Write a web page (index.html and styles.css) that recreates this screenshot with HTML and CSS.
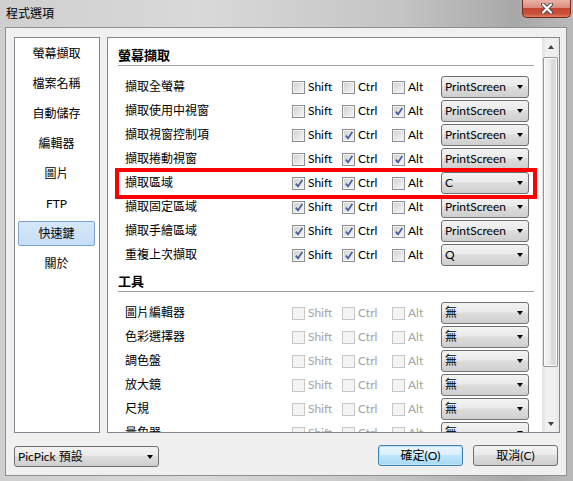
FILE: index.html
```html
<!DOCTYPE html>
<html>
<head>
<meta charset="utf-8">
<link rel="stylesheet" href="styles.css">
</head>
<body>
<div class="window">
  <div class="titlebar">
    <span class="title">程式選項</span>
    <div class="close">
      <svg width="12" height="11" viewBox="0 0 12 11"><path d="M2 1.5 L10 9.5 M10 1.5 L2 9.5" stroke="#4a4a4a" stroke-width="4" stroke-linecap="round"/><path d="M2 1.5 L10 9.5 M10 1.5 L2 9.5" stroke="#fff" stroke-width="2.2" stroke-linecap="round"/></svg>
    </div>
  </div>
  <div class="client">
    <div class="panes">
      <ul class="nav">
        <li>螢幕擷取</li>
        <li>檔案名稱</li>
        <li>自動儲存</li>
        <li>編輯器</li>
        <li>圖片</li>
        <li>FTP</li>
        <li class="sel">快速鍵</li>
        <li>關於</li>
      </ul>
      <div class="main">
        <div class="scroll">
          <div class="sec">螢幕擷取</div>
          <div class="rows">
            <div class="row"><span class="lbl">擷取全螢幕</span>
              <span class="cb"><i class="box"></i>Shift</span><span class="cb"><i class="box"></i>Ctrl</span><span class="cb"><i class="box"></i>Alt</span>
              <div class="combo"><span>PrintScreen</span><i class="arr"></i></div></div>
            <div class="row"><span class="lbl">擷取使用中視窗</span>
              <span class="cb"><i class="box"></i>Shift</span><span class="cb"><i class="box"></i>Ctrl</span><span class="cb"><i class="box on"></i>Alt</span>
              <div class="combo"><span>PrintScreen</span><i class="arr"></i></div></div>
            <div class="row"><span class="lbl">擷取視窗控制項</span>
              <span class="cb"><i class="box"></i>Shift</span><span class="cb"><i class="box on"></i>Ctrl</span><span class="cb"><i class="box"></i>Alt</span>
              <div class="combo"><span>PrintScreen</span><i class="arr"></i></div></div>
            <div class="row"><span class="lbl">擷取捲動視窗</span>
              <span class="cb"><i class="box"></i>Shift</span><span class="cb"><i class="box on"></i>Ctrl</span><span class="cb"><i class="box on"></i>Alt</span>
              <div class="combo"><span>PrintScreen</span><i class="arr"></i></div></div>
            <div class="row"><span class="lbl">擷取區域</span>
              <span class="cb"><i class="box on"></i>Shift</span><span class="cb"><i class="box on"></i>Ctrl</span><span class="cb"><i class="box"></i>Alt</span>
              <div class="combo"><span>C</span><i class="arr"></i></div></div>
            <div class="row"><span class="lbl">擷取固定區域</span>
              <span class="cb"><i class="box on"></i>Shift</span><span class="cb"><i class="box on"></i>Ctrl</span><span class="cb"><i class="box"></i>Alt</span>
              <div class="combo"><span>PrintScreen</span><i class="arr"></i></div></div>
            <div class="row"><span class="lbl">擷取手繪區域</span>
              <span class="cb"><i class="box on"></i>Shift</span><span class="cb"><i class="box on"></i>Ctrl</span><span class="cb"><i class="box on"></i>Alt</span>
              <div class="combo"><span>PrintScreen</span><i class="arr"></i></div></div>
            <div class="row"><span class="lbl">重複上次擷取</span>
              <span class="cb"><i class="box on"></i>Shift</span><span class="cb"><i class="box on"></i>Ctrl</span><span class="cb"><i class="box"></i>Alt</span>
              <div class="combo"><span>Q</span><i class="arr"></i></div></div>
          </div>
          <div class="sec sec2">工具</div>
          <div class="rows dis">
            <div class="row"><span class="lbl">圖片編輯器</span>
              <span class="cb"><i class="box"></i>Shift</span><span class="cb"><i class="box"></i>Ctrl</span><span class="cb"><i class="box"></i>Alt</span>
              <div class="combo"><span>無</span><i class="arr"></i></div></div>
            <div class="row"><span class="lbl">色彩選擇器</span>
              <span class="cb"><i class="box"></i>Shift</span><span class="cb"><i class="box"></i>Ctrl</span><span class="cb"><i class="box"></i>Alt</span>
              <div class="combo"><span>無</span><i class="arr"></i></div></div>
            <div class="row"><span class="lbl">調色盤</span>
              <span class="cb"><i class="box"></i>Shift</span><span class="cb"><i class="box"></i>Ctrl</span><span class="cb"><i class="box"></i>Alt</span>
              <div class="combo"><span>無</span><i class="arr"></i></div></div>
            <div class="row"><span class="lbl">放大鏡</span>
              <span class="cb"><i class="box"></i>Shift</span><span class="cb"><i class="box"></i>Ctrl</span><span class="cb"><i class="box"></i>Alt</span>
              <div class="combo"><span>無</span><i class="arr"></i></div></div>
            <div class="row"><span class="lbl">尺規</span>
              <span class="cb"><i class="box"></i>Shift</span><span class="cb"><i class="box"></i>Ctrl</span><span class="cb"><i class="box"></i>Alt</span>
              <div class="combo"><span>無</span><i class="arr"></i></div></div>
            <div class="row"><span class="lbl">量角器</span>
              <span class="cb"><i class="box"></i>Shift</span><span class="cb"><i class="box"></i>Ctrl</span><span class="cb"><i class="box"></i>Alt</span>
              <div class="combo"><span>無</span><i class="arr"></i></div></div>
          </div>
        </div>
        <div class="vscroll">
          <div class="sb-btn"><i class="up"></i></div>
          <div class="sb-track"><div class="thumb"></div></div>
          <div class="sb-btn"><i class="down"></i></div>
        </div>
      </div>
    </div>
    <div class="footer">
      <div class="combo preset"><span>PicPick 預設</span><i class="arr"></i></div>
      <div class="btns">
        <div class="btn default">確定(O)</div>
        <div class="btn">取消(C)</div>
      </div>
    </div>
  </div>
  <div class="mark"></div>
</div>
</body>
</html>
```
FILE: styles.css
```css
* { box-sizing: border-box; margin: 0; padding: 0; }
html, body { width: 573px; height: 481px; overflow: hidden; }
body {
  font-family: Lato, "Noto Sans CJK TC", sans-serif;
  font-size: 12px;
  color: #000;
  background: #c8c8c8;
}
.window {
  position: relative;
  width: 573px;
  height: 481px;
  display: flex;
  flex-direction: column;
  background: linear-gradient(to right, #cfcfcf 0%, #d9d9d9 35%, #c4c4c4 70%, #a8a8a8 90%, #b9b9b9 100%);
}
.titlebar {
  height: 27px;
  display: flex;
  align-items: flex-start;
  padding-left: 6px;
}
.title {
  font-family: "Noto Sans CJK TC", sans-serif;
  font-size: 12px;
  line-height: 16px;
  margin-top: 5px;
}
.close {
  margin-left: auto;
  margin-right: 2px;
  width: 49px;
  height: 18px;
  border: 1px solid #6e2a1f;
  border-top: 0;
  border-radius: 0 0 5px 5px;
  background: linear-gradient(#e9b1a6 0%, #dd8c7d 45%, #c5452f 50%, #c94f38 80%, #e27c62 100%);
  display: flex;
  align-items: center;
  justify-content: center;
}
.client {
  flex: 1;
  margin: 0 6px 5px 5px;
  border: 1px solid #8f8f8f;
  background: #f0f0f0;
  display: flex;
  flex-direction: column;
}
.panes {
  display: flex;
  gap: 7px;
  padding: 9px 6px 0 8px;
  height: 405px;
}
.nav {
  width: 86px;
  flex: none;
  border: 1px solid #828790;
  background: #fff;
  list-style: none;
  padding: 3px 4px 0 3px;
  font-family: Lato, "Noto Sans CJK TC", sans-serif;
}
.nav li {
  height: 25px;
  line-height: 23px;
  margin-bottom: 5px;
  border: 1px solid transparent;
  border-radius: 2px;
  text-align: center;
}
.nav li.sel {
  background: linear-gradient(#d6e8fa, #c6ddf6);
  border-color: #7da2ce;
}
.main {
  flex: 1;
  display: flex;
  border: 1px solid #828790;
  background: #fff;
  overflow: hidden;
}
.scroll {
  flex: 1;
  overflow: hidden;
}
.sec {
  margin: 9px 8px 0 10px;
  font-size: 13px;
  font-weight: bold;
  line-height: 16px;
  padding-bottom: 2px;
  border-bottom: 1px solid #a0a0a0;
}
.sec2 { margin-top: 6px; }
.rows {
  margin-top: 9px;
  padding-left: 17px;
}
.row {
  display: grid;
  grid-template-columns: 167px 50px 50px 49px 88px;
  height: 24px;
  align-items: center;
}
.lbl { line-height: 16px; }
.cb {
  display: flex;
  align-items: center;
  gap: 3px;
  line-height: 16px;
}
.box {
  width: 13px;
  height: 13px;
  border: 1px solid #8e8f8f;
  background: linear-gradient(135deg, #cfcfcf, #f8f8f8);
  box-shadow: inset 0 0 0 1px #f2f2f2;
  position: relative;
}
.box.on::after {
  content: "";
  position: absolute;
  left: 2px;
  top: 1px;
  width: 8px;
  height: 9px;
  background: no-repeat center / 8px 9px url("data:image/svg+xml;utf8,<svg xmlns='http://www.w3.org/2000/svg' viewBox='0 0 8 9'><path d='M0.8 4.6 L3 7.4 L7.3 0.9' fill='none' stroke='%23425d9c' stroke-width='1.7'/></svg>");
}
.dis .cb { color: #a3a3a3; }
.dis .box {
  border-color: #c6c6c6;
  background: #f4f4f4;
  box-shadow: none;
}
.combo {
  height: 22px;
  border: 1px solid #707070;
  border-radius: 3px;
  background: linear-gradient(#f2f2f2 0%, #ebebeb 45%, #dddddd 50%, #cfcfcf 100%);
  display: flex;
  align-items: center;
  padding: 0 5px 0 3px;
  line-height: 16px;
}
.arr {
  margin-left: auto;
  width: 0;
  height: 0;
  border-left: 3.5px solid transparent;
  border-right: 3.5px solid transparent;
  border-top: 4px solid #000;
}
.vscroll {
  width: 17px;
  flex: none;
  display: flex;
  flex-direction: column;
  background: linear-gradient(to right, #e2e2e2, #f0f0f0 25%, #f0f0f0 75%, #e6e6e6);
}
.sb-btn {
  height: 17px;
  display: flex;
  align-items: center;
  justify-content: center;
}
.up, .down {
  width: 0;
  height: 0;
  border-left: 3.5px solid transparent;
  border-right: 3.5px solid transparent;
}
.up { border-bottom: 4px solid #404040; }
.down { border-top: 4px solid #404040; }
.sb-track {
  flex: 1;
  padding: 2px 1px 0 1px;
}
.thumb {
  height: 310px;
  border: 1px solid #979797;
  border-radius: 2px;
  background: linear-gradient(to right, #f4f4f4, #e8e8e8 50%, #d9d9d9 51%, #dcdcdc);
  box-shadow: inset 0 0 0 1px #fbfbfb;
}
.footer {
  margin-top: 12px;
  height: 22px;
  display: flex;
  justify-content: space-between;
  padding: 0 8px 0 8px;
}
.preset {
  width: 145px;
  margin-top: 1px;
  height: 21px;
  padding-left: 3px;
  padding-right: 5px;
}
.btns {
  display: flex;
  gap: 10px;
}
.btn {
  width: 85px;
  height: 21px;
  border: 1px solid #707070;
  border-radius: 3px;
  background: linear-gradient(#f2f2f2 0%, #ebebeb 45%, #dddddd 50%, #cfcfcf 100%);
  display: flex;
  align-items: center;
  justify-content: center;
  line-height: 16px;
}
.btn.default {
  border-color: #3c7fb1;
  background: linear-gradient(#eaf6fd 0%, #d9f0fc 45%, #bee6fd 50%, #a7d9f5 100%);
  box-shadow: inset 0 0 0 1px #c2e4f6;
}
.mark {
  position: absolute;
  left: 115px;
  top: 168px;
  width: 422px;
  height: 31px;
  border: 4px solid #ff0000;
}
```
